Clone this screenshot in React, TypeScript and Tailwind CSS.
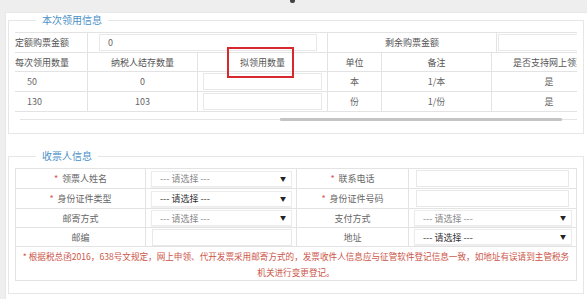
import React from 'react';

// 表格公共样式
const cellBase = 'h-full flex items-center border-r border-[#e3e3e3]';

const Star: React.FC = () => <span className="text-[#d9534f] mr-[4px]">*</span>;

const SelectBox: React.FC<{ width: string; dark?: boolean }> = ({ width, dark }) => (
  <div
    className={`${width} h-[16px] flex items-center justify-between pl-[8px] pr-[5px] bg-white border border-[#ececec] shadow-[0_1px_1px_rgba(0,0,0,0.06)] ${
      dark ? 'text-[#333]' : 'text-[#888]'
    }`}
  >
    <span>--- 请选择 ---</span>
    <span className="text-[6px] text-[#222]">▼</span>
  </div>
);

const TextBox: React.FC<{ width: string; value?: string }> = ({ width, value }) => (
  <div className={`${width} h-[17px] flex items-center pl-[8px] bg-white border border-[#e8e8e8] text-[#666]`}>
    {value}
  </div>
);

const issueRows = [
  { qty: '50', stock: '0', unit: '本', note: '1/本', online: '是' },
  { qty: '130', stock: '103', unit: '份', note: '1/份', online: '是' },
];

export default function App() {
  return (
    <div className="w-[587px] h-[299px] overflow-hidden bg-[#eeeeee] font-['Noto_Sans_CJK_SC',sans-serif] text-[9px] text-[#666]">
      {/* 顶部条 */}
      <div className="h-[12px] flex items-start">
        <div className="ml-[290px] w-[5px] h-[3px] bg-[#444] rounded-b-[2px]" />
      </div>

      <div className="ml-[5px] h-[287px] bg-white border-l border-t border-[#e8e8e8]">
        {/* 本次领用信息 */}
        <fieldset className="min-w-0 ml-[2px] mr-[3px] border border-[#e6e6e6] pl-[6px] pr-[6px] pt-[5px] pb-[12px]">
          <legend className="ml-[21px] px-[6px] text-[10px] leading-[14px] text-[#4a90c9]">本次领用信息</legend>

          <div className="w-[562px] overflow-hidden">
            <div className="w-[591px] border-t border-b border-[#e3e3e3] leading-none">
              {/* 金额行 */}
              <div className="h-[20px] flex border-b border-[#e3e3e3] text-[#555]">
                <div className={`${cellBase} w-[73px]`}>定额购票金额</div>
                <div className={`${cellBase} w-[240px] pl-[11px]`}>
                  <TextBox width="w-[218px]" value="0" />
                </div>
                <div className={`${cellBase} w-[169px] justify-center`}>剩余购票金额</div>
                <div className="h-full flex-1 flex items-center pl-[1px]">
                  <TextBox width="w-[100px]" />
                </div>
              </div>

              {/* 表头 */}
              <div className="h-[19px] flex border-b border-[#e3e3e3] text-[#555]">
                <div className={`${cellBase} w-[73px]`}>每次领用数量</div>
                <div className={`${cellBase} w-[110px] justify-center`}>纳税人结存数量</div>
                <div className={`${cellBase} w-[130px] justify-center relative`}>
                  拟领用数量
                  <div className="absolute left-[29px] top-[-6px] w-[67px] h-[31px] border-2 border-[#d7282f]" />
                </div>
                <div className={`${cellBase} w-[54px] justify-center`}>单位</div>
                <div className={`${cellBase} w-[110px] justify-center`}>备注</div>
                <div className="h-full w-[114px] flex items-center justify-center whitespace-nowrap">是否支持网上领票</div>
              </div>

              {issueRows.map((row, i) => (
                <div
                  key={row.qty}
                  className={`${i === 0 ? 'h-[20px] border-b border-[#e3e3e3]' : 'h-[19px]'} flex`}
                >
                  <div className={`${cellBase} w-[73px] pl-[12px]`}>{row.qty}</div>
                  <div className={`${cellBase} w-[110px] justify-center`}>{row.stock}</div>
                  <div className={`${cellBase} w-[130px] px-[5px]`}>
                    <TextBox width="w-[120px]" />
                  </div>
                  <div className={`${cellBase} w-[54px] justify-center`}>{row.unit}</div>
                  <div className={`${cellBase} w-[110px] justify-center`}>{row.note}</div>
                  <div className="h-full w-[114px] flex items-center justify-center">{row.online}</div>
                </div>
              ))}
            </div>
          </div>

          {/* 横向滚动条 */}
          <div className="mt-[6px] ml-[5px] w-[557px] h-[3px] flex items-center">
            <div className="w-[260px] h-[1px] bg-[#e4e4e4]" />
            <div className="w-[282px] h-[3px] bg-[#c4c4c4] rounded-[1px]" />
            <div className="flex-1 h-[1px] bg-[#e4e4e4]" />
          </div>
        </fieldset>

        {/* 收票人信息 */}
        <fieldset className="min-w-0 mt-[15px] ml-[2px] mr-[3px] border border-[#e6e6e6] pl-[6px] pr-[6px] pt-[5px] pb-[12px]">
          <legend className="ml-[21px] px-[6px] text-[10px] leading-[14px] text-[#4a90c9]">收票人信息</legend>

          <div className="w-[562px] border border-[#e3e3e3] leading-none">
            <div className="h-[20px] flex border-b border-[#e3e3e3]">
              <div className={`${cellBase} w-[130px] justify-center`}><Star />领票人姓名</div>
              <div className={`${cellBase} w-[151px] pl-[5px]`}><SelectBox width="w-[141px]" /></div>
              <div className={`${cellBase} w-[112px] justify-center`}><Star />联系电话</div>
              <div className="h-full flex-1 flex items-center pl-[7px]"><TextBox width="w-[153px]" /></div>
            </div>
            <div className="h-[20px] flex border-b border-[#e3e3e3]">
              <div className={`${cellBase} w-[130px] justify-center`}><Star />身份证件类型</div>
              <div className={`${cellBase} w-[151px] pl-[5px]`}><SelectBox width="w-[141px]" dark /></div>
              <div className={`${cellBase} w-[112px] justify-center`}><Star />身份证件号码</div>
              <div className="h-full flex-1 flex items-center pl-[7px]"><TextBox width="w-[153px]" /></div>
            </div>
            <div className="h-[19px] flex border-b border-[#e3e3e3]">
              <div className={`${cellBase} w-[130px] justify-center`}>邮寄方式</div>
              <div className={`${cellBase} w-[151px] pl-[5px]`}><SelectBox width="w-[141px]" /></div>
              <div className={`${cellBase} w-[112px] justify-center`}>支付方式</div>
              <div className="h-full flex-1 flex items-center pl-[5px]"><SelectBox width="w-[158px]" /></div>
            </div>
            <div className="h-[19px] flex border-b border-[#e3e3e3]">
              <div className={`${cellBase} w-[130px] justify-center`}>邮编</div>
              <div className={`${cellBase} w-[151px] pl-[6px]`}><TextBox width="w-[140px]" /></div>
              <div className={`${cellBase} w-[112px] justify-center`}>地址</div>
              <div className="h-full flex-1 flex items-center pl-[5px]"><SelectBox width="w-[158px]" dark /></div>
            </div>
            <div className="h-[33px] pt-[1px] text-center text-[8.6px] leading-[16px] text-[#cc5548] whitespace-nowrap">
              * 根据税总函2016，638号文规定，网上申领、代开发票采用邮寄方式的，发票收件人信息应与征管软件登记信息一致，如地址有误请到主管税务
              <br />
              机关进行变更登记。
            </div>
          </div>
        </fieldset>
      </div>
    </div>
  );
}
